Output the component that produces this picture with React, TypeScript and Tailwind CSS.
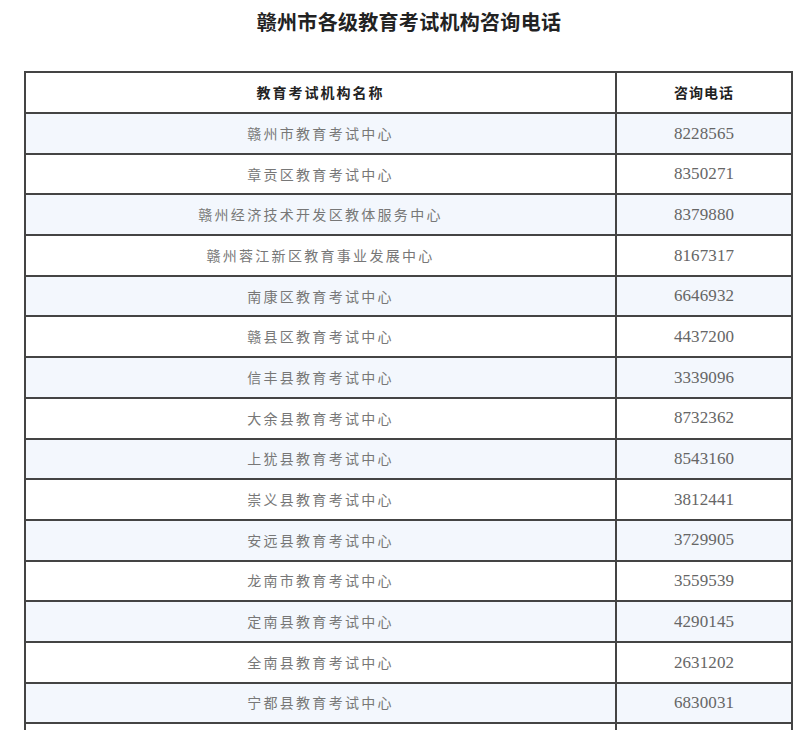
const ROWS: [string, string][] = [
  ["赣州市教育考试中心", "8228565"],
  ["章贡区教育考试中心", "8350271"],
  ["赣州经济技术开发区教体服务中心", "8379880"],
  ["赣州蓉江新区教育事业发展中心", "8167317"],
  ["南康区教育考试中心", "6646932"],
  ["赣县区教育考试中心", "4437200"],
  ["信丰县教育考试中心", "3339096"],
  ["大余县教育考试中心", "8732362"],
  ["上犹县教育考试中心", "8543160"],
  ["崇义县教育考试中心", "3812441"],
  ["安远县教育考试中心", "3729905"],
  ["龙南市教育考试中心", "3559539"],
  ["定南县教育考试中心", "4290145"],
  ["全南县教育考试中心", "2631202"],
  ["宁都县教育考试中心", "6830031"],
  ["", ""],
];

const CJK = "font-['Noto_Sans_CJK_SC',sans-serif]";

export default function App() {
  return (
    <div className="w-[800px] h-[730px] overflow-hidden bg-white">
      <h1
        className={`pt-[10px] pl-[18px] text-center text-[20px] leading-[24px] font-bold tracking-[0.3px] text-[#222] ${CJK}`}
      >
        赣州市各级教育考试机构咨询电话
      </h1>

      <div className="ml-[24px] mt-[37px] w-[769px] border-x-2 border-t-2 border-[#444]">
        <div className="flex h-[41px] border-b-2 border-[#444] bg-white">
          <div
            className={`w-[589px] flex items-center justify-center text-[14px] font-bold tracking-[2px] text-[#222] ${CJK}`}
          >
            教育考试机构名称
          </div>
          <div
            className={`flex-1 flex items-center justify-center border-l-2 border-[#444] text-[14px] font-bold tracking-[1px] text-[#222] ${CJK}`}
          >
            咨询电话
          </div>
        </div>

        {ROWS.map(([name, phone], i) => (
          <div
            key={i}
            className={`flex h-[40.7px] border-b-2 border-[#444] ${i % 2 === 0 ? "bg-[#f3f7fd]" : "bg-white"}`}
          >
            <div
              className={`w-[589px] flex items-center justify-center text-[14px] tracking-[2.3px] text-[#777] ${CJK}`}
            >
              {name}
            </div>
            <div className="flex-1 flex items-center justify-center border-l-2 border-[#444] text-[17px] tracking-[0.1px] text-[#666] font-['Liberation_Serif',serif]">
              {phone}
            </div>
          </div>
        ))}
      </div>
    </div>
  );
}
